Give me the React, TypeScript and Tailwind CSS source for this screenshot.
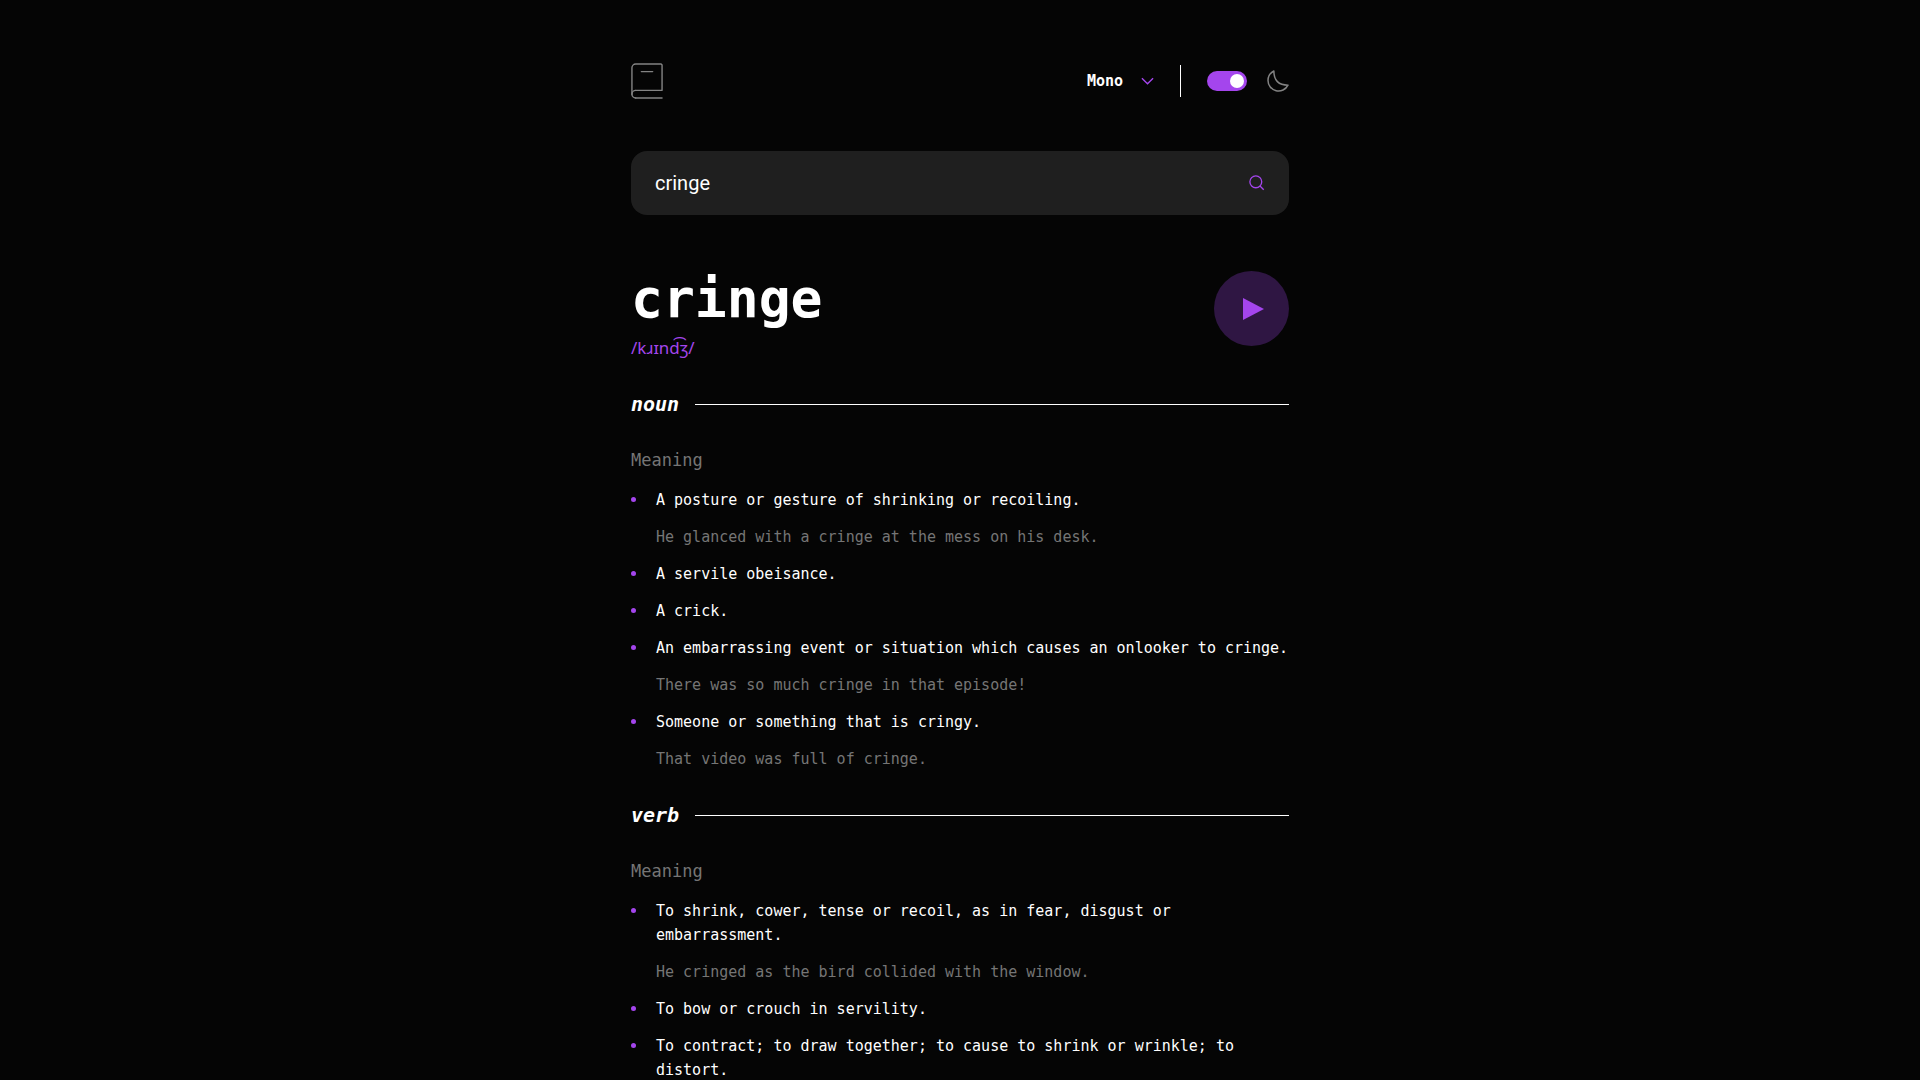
import { useState } from "react";

type Sense = { definition: string; example?: string };
type Entry = { part: string; senses: Sense[] };

const entries: Entry[] = [
  {
    part: "noun",
    senses: [
      {
        definition: "A posture or gesture of shrinking or recoiling.",
        example: "He glanced with a cringe at the mess on his desk.",
      },
      { definition: "A servile obeisance." },
      { definition: "A crick." },
      {
        definition: "An embarrassing event or situation which causes an onlooker to cringe.",
        example: "There was so much cringe in that episode!",
      },
      {
        definition: "Someone or something that is cringy.",
        example: "That video was full of cringe.",
      },
    ],
  },
  {
    part: "verb",
    senses: [
      {
        definition: "To shrink, cower, tense or recoil, as in fear, disgust or embarrassment.",
        example: "He cringed as the bird collided with the window.",
      },
      { definition: "To bow or crouch in servility." },
      { definition: "To contract; to draw together; to cause to shrink or wrinkle; to distort." },
    ],
  },
];

function Logo() {
  return (
    <svg width="32" height="36" viewBox="0 0 34 38" fill="none" stroke="#838383" strokeWidth="1.5" strokeLinecap="round" role="img" aria-label="Dictionary">
      <path d="M1 33V5a4 4 0 0 1 4-4h26.8A1.2 1.2 0 0 1 33 2.2v26.228M5 29h28M5 37h28" />
      <path strokeLinejoin="round" d="M5 37a4 4 0 1 1 0-8" />
      <path d="M11 9h12" />
    </svg>
  );
}

function Header() {
  const [dark, setDark] = useState(true);
  return (
    <header className="flex items-center justify-between">
      <Logo />
      <div className="flex items-center">
        <button type="button" className="flex items-center gap-[18px] text-[15px] leading-6 font-bold">
          Mono
          <svg width="13" height="8" viewBox="0 0 14 8" fill="none" stroke="#A445ED" strokeWidth="1.5">
            <path d="m1 1 6 6 6-6" />
          </svg>
        </button>
        <span className="mx-[26px] h-8 w-px bg-white" />
        <label className="flex cursor-pointer items-center gap-5">
          <input
            type="checkbox"
            role="switch"
            aria-label="Dark mode"
            checked={dark}
            onChange={(e) => setDark(e.target.checked)}
            className="peer sr-only"
          />
          <span className="flex h-5 w-10 items-center justify-start rounded-full bg-[#757575] px-[3px] peer-checked:justify-end peer-checked:bg-[#A445ED]">
            <span className="size-[14px] rounded-full bg-white" />
          </span>
          <svg width="22" height="22" viewBox="0 0 22 22" fill="none" stroke="#838383" strokeWidth="1.5" strokeLinecap="round" strokeLinejoin="round">
            <path d="M1 10.449a10.544 10.544 0 0 0 19.993 4.686C11.544 15.135 6.858 10.448 6.858 1A10.545 10.545 0 0 0 1 10.449Z" />
          </svg>
        </label>
      </div>
    </header>
  );
}

function SearchBox() {
  const [query, setQuery] = useState("cringe");
  return (
    <form className="mt-[52px] flex h-16 items-center rounded-2xl bg-[#1f1f1f] px-6" onSubmit={(e) => e.preventDefault()}>
      <input
        type="text"
        aria-label="Search for a word"
        spellCheck={false}
        value={query}
        onChange={(e) => setQuery(e.target.value)}
        className="min-w-0 flex-1 bg-transparent font-[Roboto,sans-serif] text-xl leading-7 outline-none"
      />
      <button type="submit" aria-label="Search">
        <svg width="16" height="16" viewBox="0 0 18 18" fill="none" stroke="#A445ED" strokeWidth="1.5">
          <path d="m12.663 12.663 3.887 3.887M1 7.664a6.665 6.665 0 1 0 13.33 0 6.665 6.665 0 0 0-13.33 0Z" />
        </svg>
      </button>
    </form>
  );
}

function WordHeading() {
  return (
    <div className="mt-14 flex items-start justify-between">
      <div>
        <h1 className="text-[53px] leading-14 font-bold">cringe</h1>
        <p className="mt-2 font-['Noto_Sans',sans-serif] text-[17px] leading-[25px] text-[#A445ED]">/kɹɪnd͡ʒ/</p>
      </div>
      <button type="button" aria-label="Play pronunciation">
        <svg width="75" height="75" viewBox="0 0 75 75" fill="#A445ED">
          <circle cx="37.5" cy="37.5" r="37.5" opacity=".27" />
          <path d="M29 27v22l21-11z" />
        </svg>
      </button>
    </div>
  );
}

function EntrySection({ part, senses }: Entry) {
  return (
    <section className="mt-7">
      <div className="flex items-center gap-4">
        <h2 className="text-xl leading-8 font-bold italic">{part}</h2>
        <span className="h-px flex-1 bg-white" />
      </div>
      <h3 className="mt-7 text-[17px] leading-6 text-[#757575]">Meaning</h3>
      <ul className="mt-4 flex flex-col gap-[13px] text-[15px] leading-6">
        {senses.map((s) => (
          <li key={s.definition} className="flex gap-5">
            <span className="mt-[9px] size-[5px] shrink-0 rounded-full bg-[#A445ED]" />
            <div className="flex flex-col gap-[13px]">
              <p>{s.definition}</p>
              {s.example && <p className="text-[#757575]">{s.example}</p>}
            </div>
          </li>
        ))}
      </ul>
    </section>
  );
}

export default function App() {
  return (
    <div className="h-screen overflow-hidden bg-[#050505] px-6 font-['DejaVu_Sans_Mono',monospace] text-white">
      <main className="mx-auto max-w-[658px] pt-[63px]">
        <Header />
        <SearchBox />
        <WordHeading />
        {entries.map((e) => (
          <EntrySection key={e.part} {...e} />
        ))}
      </main>
    </div>
  );
}
